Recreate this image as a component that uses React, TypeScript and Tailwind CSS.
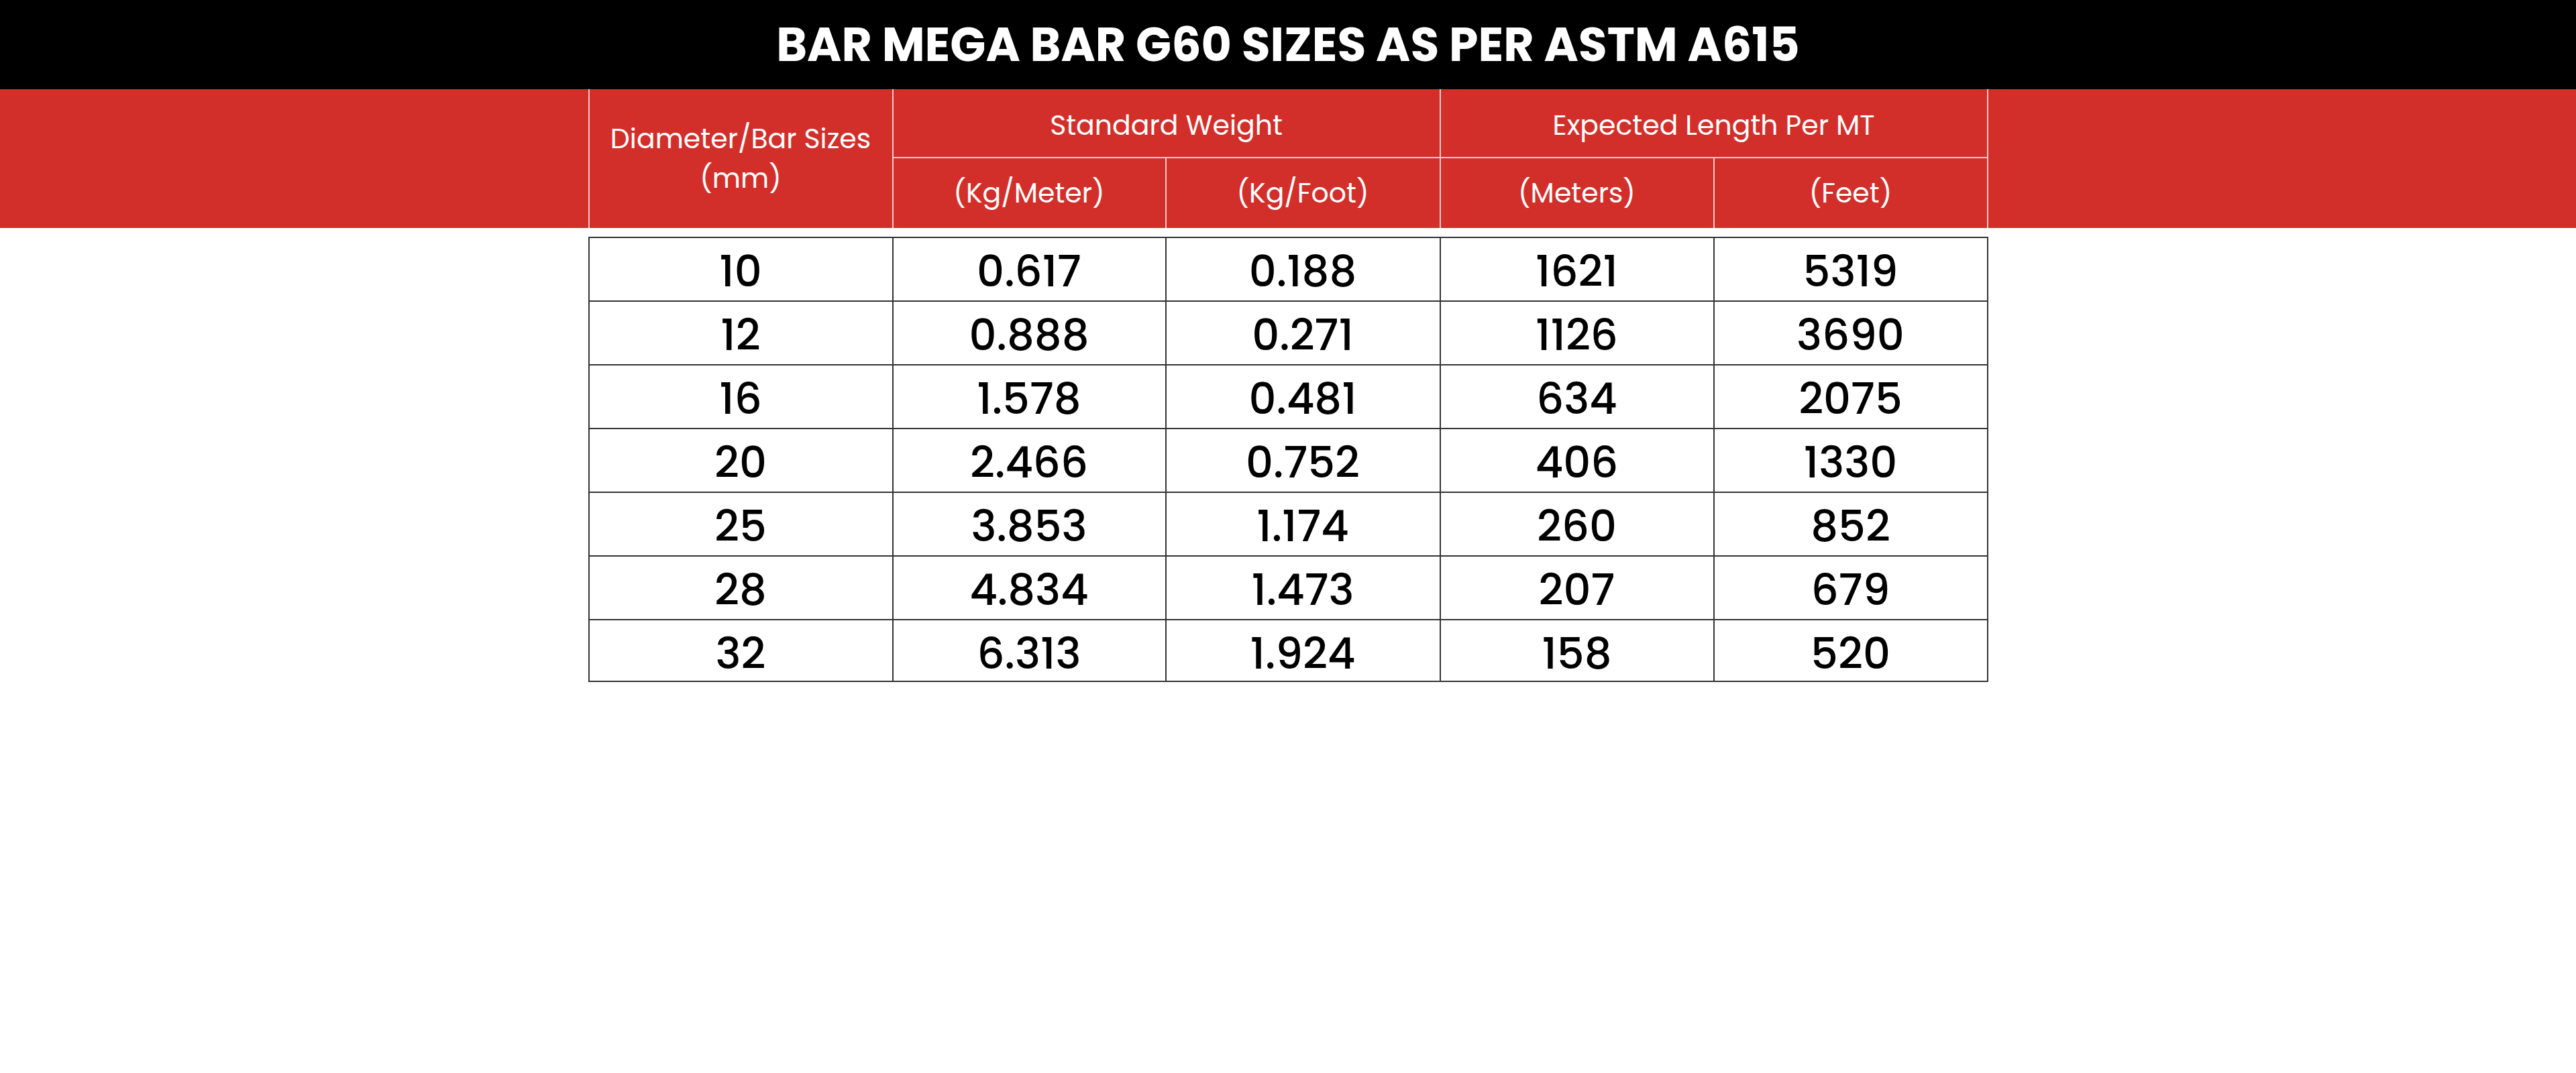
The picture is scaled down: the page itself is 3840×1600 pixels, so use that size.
const rows = [
  ['10', '0.617', '0.188', '1621', '5319'],
  ['12', '0.888', '0.271', '1126', '3690'],
  ['16', '1.578', '0.481', '634', '2075'],
  ['20', '2.466', '0.752', '406', '1330'],
  ['25', '3.853', '1.174', '260', '852'],
  ['28', '4.834', '1.473', '207', '679'],
  ['32', '6.313', '1.924', '158', '520'],
];

const colWidths = ['453px', '407px', '409px', '408px', '408px'];

function Cols() {
  return (
    <colgroup>
      {colWidths.map((w, i) => (
        <col key={i} style={{ width: w }} />
      ))}
    </colgroup>
  );
}

export default function App() {
  return (
    <div className="min-h-screen w-full bg-white font-['Poppins','Inter','Noto_Sans',sans-serif]">
      <div className="flex h-[133px] items-center justify-center bg-black pt-[2px]">
        <h1 className="text-[69.7px] font-bold text-white">
          BAR MEGA BAR G60 SIZES AS PER ASTM A615
        </h1>
      </div>

      <div className="bg-[#d32f2a]">
        <table className="mx-auto w-[2085px] table-fixed border-collapse text-white">
          <Cols />
          <thead>
            <tr className="h-[102px]">
              <th
                rowSpan={2}
                className="border-x-2 border-[#f3c9c7] pb-[2px] text-[41px] font-normal leading-[59px]"
              >
                Diameter/Bar Sizes
                <br />
                (mm)
              </th>
              <th colSpan={2} className="border-x-2 border-b-2 border-[#f3c9c7] pt-[6px] text-[41px] font-normal">
                Standard Weight
              </th>
              <th colSpan={2} className="border-x-2 border-b-2 border-[#f3c9c7] pt-[6px] text-[41px] font-normal">
                Expected Length Per MT
              </th>
            </tr>
            <tr className="h-[105px]">
              {['(Kg/Meter)', '(Kg/Foot)', '(Meters)', '(Feet)'].map((t) => (
                <th key={t} className="border-x-2 border-[#f3c9c7] text-[41px] font-normal">
                  {t}
                </th>
              ))}
            </tr>
          </thead>
        </table>
      </div>

      <table className="mx-auto mt-[13px] w-[2085px] table-fixed border-collapse border-2 border-[#333333] text-black">
        <Cols />
        <tbody>
          {rows.map((r, i) => (
            <tr key={i} className={i === rows.length - 1 ? 'h-[92px]' : 'h-[95px]'}>
              {r.map((c, j) => (
                <td
                  key={j}
                  className={`border-2 border-[#333333] text-center text-[64px] font-medium leading-none ${
                    i === rows.length - 1 ? 'pt-[10px]' : 'pt-[6px]'
                  }`}
                >
                  {c}
                </td>
              ))}
            </tr>
          ))}
        </tbody>
      </table>
    </div>
  );
}
